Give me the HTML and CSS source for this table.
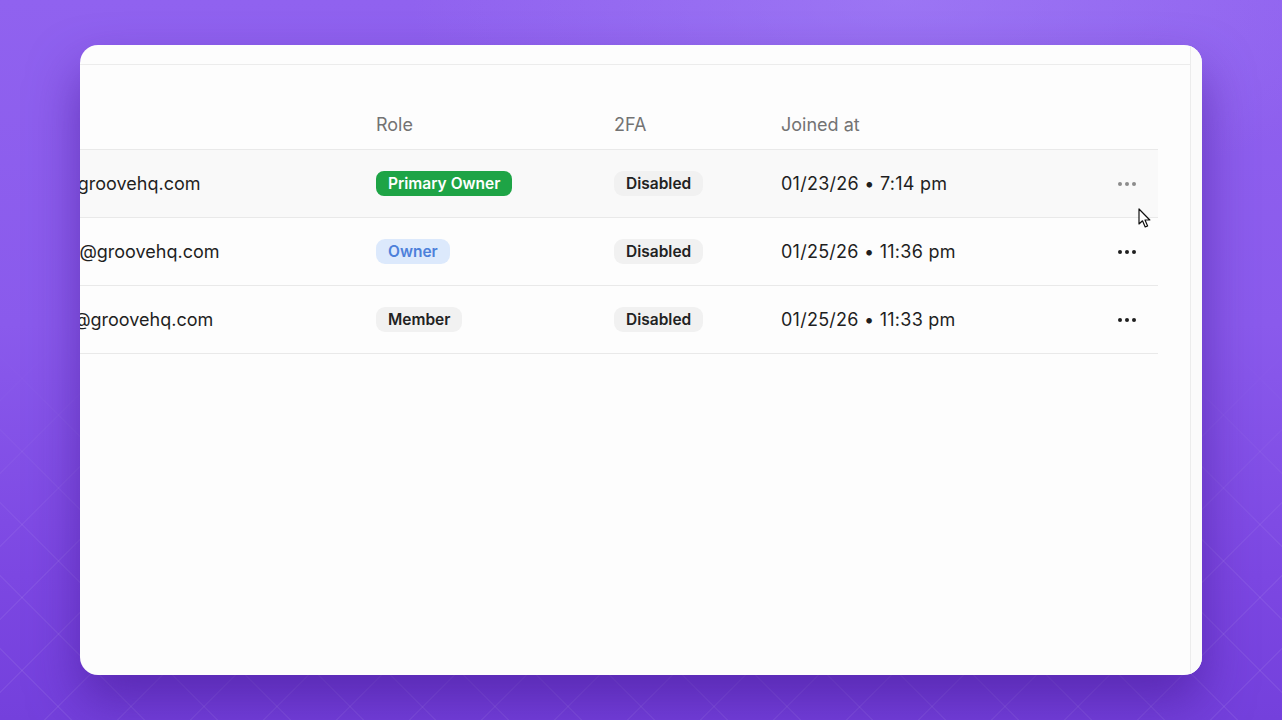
FILE: index.html
```html
<!DOCTYPE html>
<html lang="en">
<head>
<meta charset="utf-8">
<title>Team members</title>
<link rel="stylesheet" href="styles.css">
</head>
<body>
<div class="stage">
  <div class="card">
    <div class="main">
      <div class="topbar"></div>
      <div class="table">
        <div class="row head">
          <div class="cell">Email</div>
          <div class="cell">Role</div>
          <div class="cell">2FA</div>
          <div class="cell">Joined at</div>
          <div class="cell"></div>
        </div>
        <div class="row hover">
          <div class="cell email">alex@groovehq.com</div>
          <div class="cell"><span class="badge primary">Primary Owner</span></div>
          <div class="cell"><span class="badge gray">Disabled</span></div>
          <div class="cell date">01/23/26 • 7:14 pm</div>
          <div class="cell actions"><span class="dots light"><i></i><i></i><i></i></span></div>
        </div>
        <div class="row">
          <div class="cell email">jordan@groovehq.com</div>
          <div class="cell"><span class="badge owner">Owner</span></div>
          <div class="cell"><span class="badge gray">Disabled</span></div>
          <div class="cell date">01/25/26 • 11:36 pm</div>
          <div class="cell actions"><span class="dots"><i></i><i></i><i></i></span></div>
        </div>
        <div class="row">
          <div class="cell email">sarah@groovehq.com</div>
          <div class="cell"><span class="badge gray">Member</span></div>
          <div class="cell"><span class="badge gray">Disabled</span></div>
          <div class="cell date">01/25/26 • 11:33 pm</div>
          <div class="cell actions"><span class="dots"><i></i><i></i><i></i></span></div>
        </div>
      </div>
    </div>
    <div class="scrollstrip"></div>
    <svg class="cursor" width="16" height="22" viewBox="0 0 16 22"><path d="M1 1 L1 16 L4.5 12.8 L7.2 19 L9.6 18 L7 12 L11.8 12 Z" fill="#fff" stroke="#111" stroke-width="1.2" stroke-linejoin="round"/></svg>
  </div>
</div>
</body>
</html>
```
FILE: styles.css
```css
* { box-sizing: border-box; }
html, body { margin: 0; padding: 0; }
body {
  width: 1282px;
  height: 720px;
  overflow: hidden;
  font-family: Inter, "Noto Sans", "Liberation Sans", sans-serif;
}
.stage {
  position: relative;
  width: 1282px;
  height: 720px;
  padding: 45px 80px;
  background:
    radial-gradient(ellipse 700px 300px at 900px 0px, rgba(170,140,250,0.45), transparent 70%),
    linear-gradient(180deg, #9062ef 0%, #8a5aec 45%, #7c47e2 80%, #7440dc 100%);
  overflow: hidden;
}
.stage::before {
  content: "";
  position: absolute;
  inset: 0;
  background:
    repeating-linear-gradient(45deg, transparent 0 50px, rgba(255,255,255,0.06) 50px 51.5px),
    repeating-linear-gradient(-45deg, transparent 0 50px, rgba(255,255,255,0.06) 50px 51.5px);
  -webkit-mask-image: linear-gradient(180deg, transparent 0%, transparent 45%, #000 80%);
  mask-image: linear-gradient(180deg, transparent 0%, transparent 45%, #000 80%);
}
.card {
  position: relative;
  height: 630px;
  background: #fdfdfd;
  border-radius: 18px;
  overflow: hidden;
  display: flex;
  box-shadow: 0 26px 50px rgba(70, 25, 150, 0.6);
}
.main {
  flex: 1;
  min-width: 0;
}
.scrollstrip {
  width: 12px;
  border-left: 1px solid #ececec;
  background: #fbfbfb;
}
.topbar {
  height: 20px;
  border-bottom: 1px solid #ececec;
}
.table {
  margin-left: -54px;
  margin-right: 32px;
}
.row {
  display: grid;
  grid-template-columns: 350px 238px 167px 1fr 80px;
  height: 68px;
  align-items: center;
  border-bottom: 1px solid #e9e9e9;
  font-size: 18px;
  color: #1f1f1f;
}
.row.head {
  height: 85px;
  align-items: end;
  padding-bottom: 14px;
  color: #737373;
}
.row.head .cell:first-child { visibility: hidden; }
.row.hover { background: #f9f9f9; }
.cell { white-space: nowrap; }
.date { letter-spacing: 0.25px; }
.badge {
  display: inline-block;
  height: 25px;
  line-height: 25px;
  padding: 0 12px;
  border-radius: 9px;
  font-size: 15.5px;
  font-weight: 600;
}
.badge.primary { background: #1ea446; color: #fff; border-radius: 8px; }
.badge.owner { background: #dce9fc; color: #4d80da; }
.badge.gray { background: #f1f1f1; color: #222; }
.actions {
  display: flex;
  justify-content: flex-end;
  padding-right: 22px;
  padding-top: 1px;
}
.dots { display: flex; gap: 3px; }
.dots i {
  width: 4px;
  height: 4px;
  border-radius: 50%;
  background: #1f1f1f;
}
.dots.light i { background: #8c8c8c; }
.cursor {
  position: absolute;
  left: 1058px;
  top: 163px;
}
```
